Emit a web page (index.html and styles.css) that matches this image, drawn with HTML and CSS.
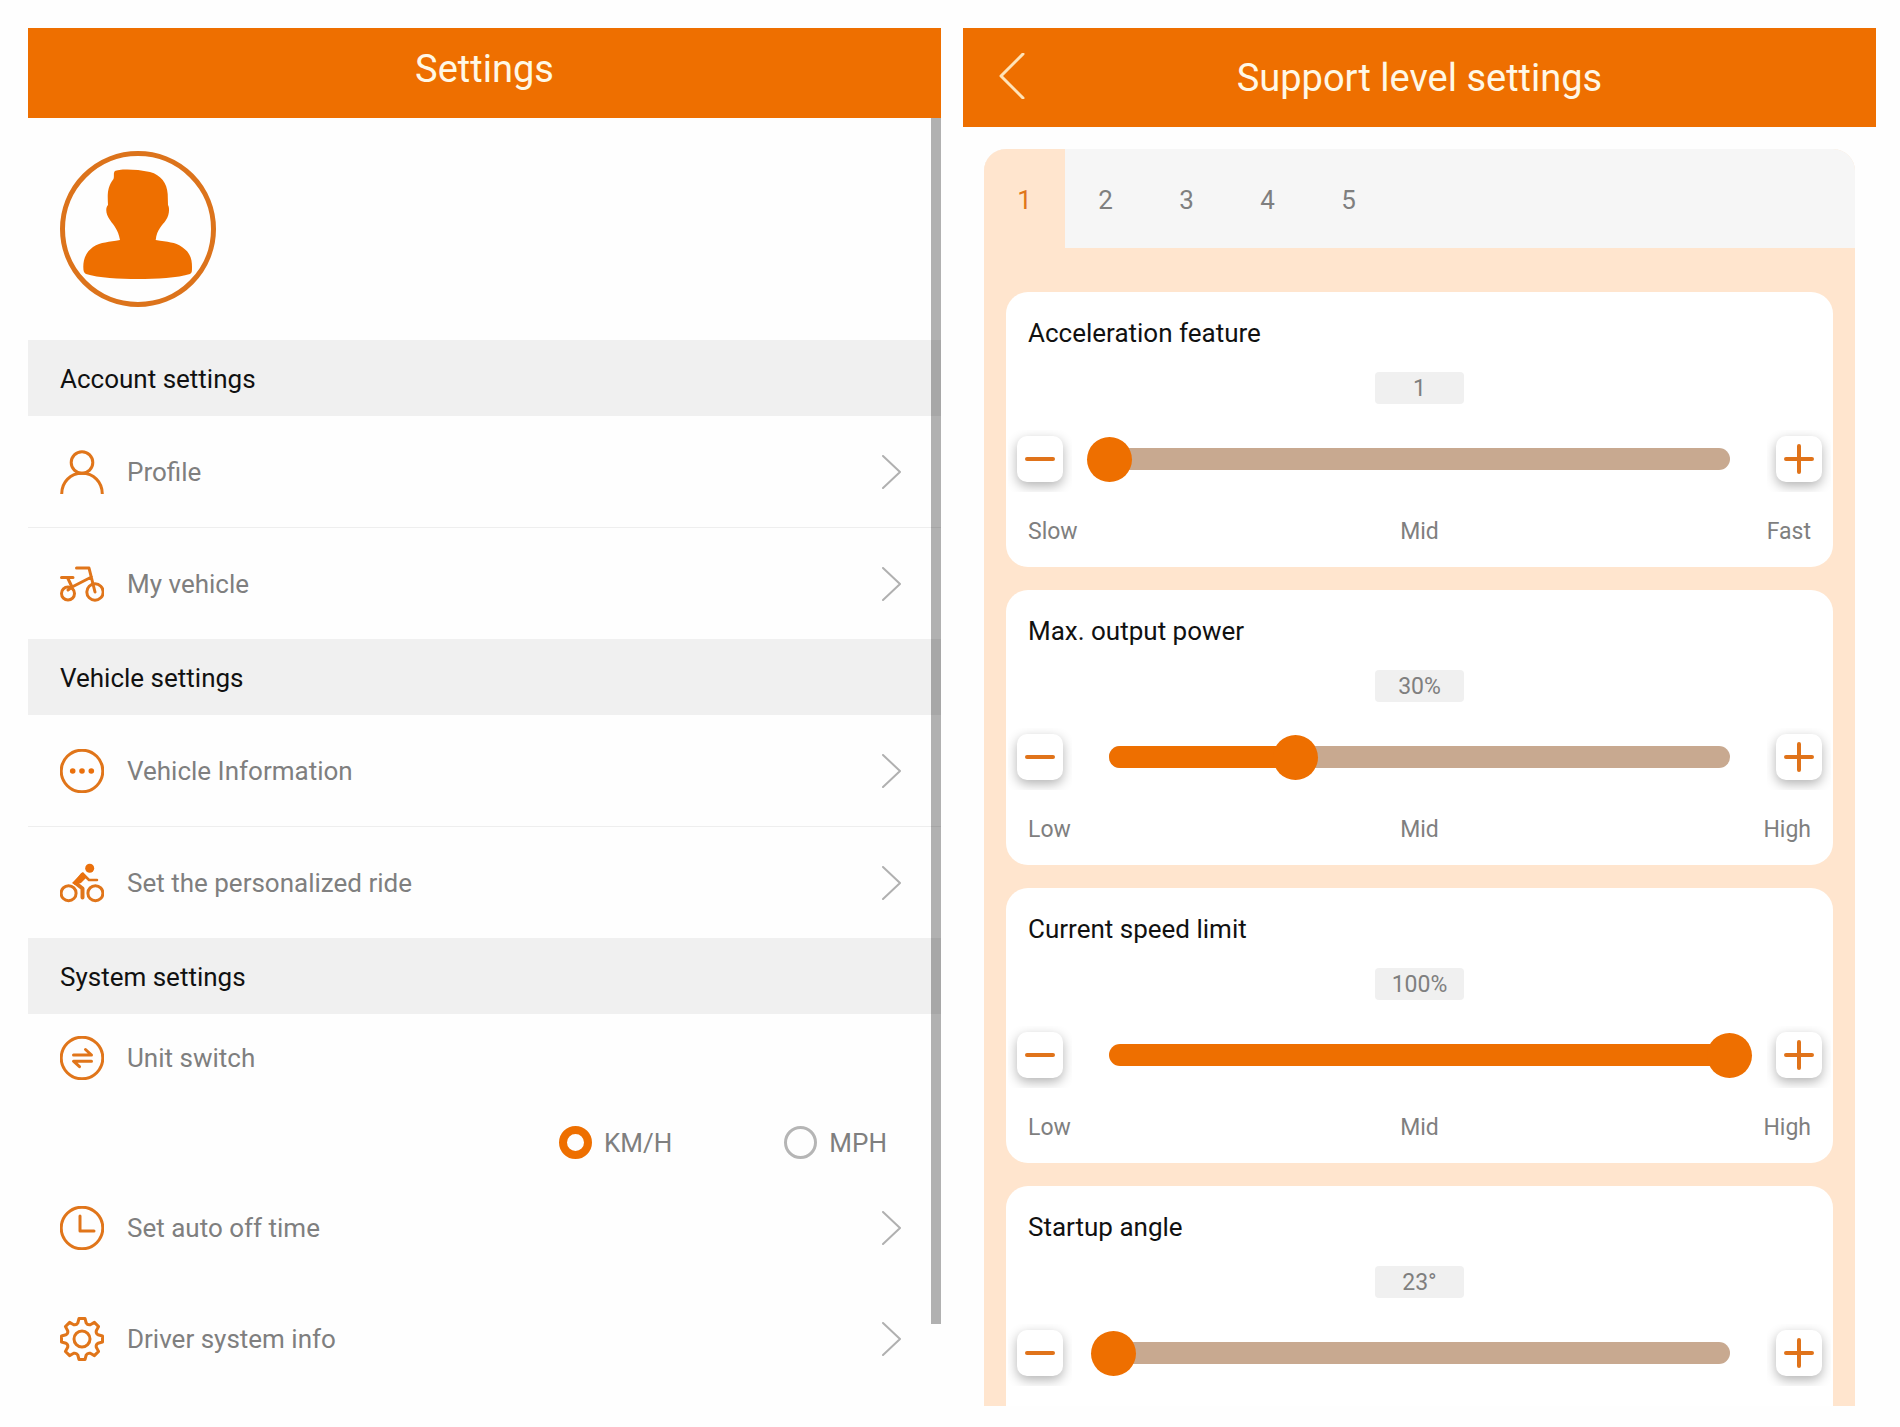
FILE: index.html
```html
<!DOCTYPE html>
<html lang="en">
<head>
    <meta charset="UTF-8">
    <meta name="viewport" content="width=device-width, initial-scale=1.0">
    <title>Settings</title>
    <link rel="stylesheet" href="styles.css">
</head>
<body>
    <main class="screens">
        <section class="screen">
            <header class="header header-main">
                <h1>Settings</h1>
            </header>

            <div class="settings">
                <div class="profile-photo">
                    <svg class="avatar" viewBox="0 0 156 156" role="img" aria-label="User photo">
                        <circle cx="78" cy="78" r="75.500" fill="none" stroke="#dc731b" stroke-width="5"/>
                        <path fill="#ee6f00" d="M55 20C58 18 75 17.500 90 21C101 24 107 32 107.700 43L108 54C110 57 109 65 106 69C102 75 97 78 95.700 89C108 91 115 91 122 96C131 102 132 109 132 116C132 120 132 122 130 123C118 127 96 128 77.700 128C60 128 38 127 26 123C24 122 23.300 120 23.300 116C23.300 109 25 102 33 96C41 91 49 91 60 89C58 78 54 75 50 69C46 64 45 57 48 54C47.500 44 47 36 53.500 28C54.500 25 53 22 55 20Z"/>
                    </svg>
                </div>

                <h2 class="group-title">Account settings</h2>
                <a class="row" href="#profile">
                    <svg class="icon" viewBox="0 0 44 44">
                        <circle cx="22" cy="12.500" r="10.800"/>
                        <path d="M1.700 44C1.700 32 10.500 23.300 22 23.300S42.300 32 42.300 44"/>
                    </svg>
                    <span>Profile</span>
                    <svg class="chevron" viewBox="0 0 20 34"><path d="M1 1l17 16L1 33"/></svg>
                </a>
                <a class="row" href="#vehicle">
                    <svg class="icon" viewBox="0 0 44 44">
                        <circle cx="8" cy="31.500" r="6.500"/>
                        <circle cx="35" cy="30" r="8.200"/>
                        <path d="M16.500 6h12.500L35 30M1.500 15.500h11.500M7.500 15.500l4.500 9.500L31.500 15M12 25L8 28"/>
                    </svg>
                    <span>My vehicle</span>
                    <svg class="chevron" viewBox="0 0 20 34"><path d="M1 1l17 16L1 33"/></svg>
                </a>

                <h2 class="group-title">Vehicle settings</h2>
                <a class="row" href="#information">
                    <svg class="icon" viewBox="0 0 44 44">
                        <circle cx="22" cy="22" r="20.800"/>
                        <g class="solid">
                            <circle cx="12.700" cy="22" r="2.800"/>
                            <circle cx="22" cy="22" r="2.800"/>
                            <circle cx="31.300" cy="22" r="2.800"/>
                        </g>
                    </svg>
                    <span>Vehicle Information</span>
                    <svg class="chevron" viewBox="0 0 20 34"><path d="M1 1l17 16L1 33"/></svg>
                </a>
                <a class="row" href="#ride">
                    <svg class="icon" viewBox="0 0 44 44">
                        <circle cx="8.600" cy="32.200" r="7.500"/>
                        <circle cx="35.400" cy="32.200" r="7.500"/>
                        <circle class="solid" cx="29.700" cy="7.200" r="4.500"/>
                        <path d="M24 14l5 5h8" stroke-width="2.500"/>
                        <path d="M22.500 13.500L15.500 22l7 5.500v9" stroke-width="4"/>
                        <path class="solid" d="M23 11l4 5-6 6-6 2-3-2z"/>
                    </svg>
                    <span>Set the personalized ride</span>
                    <svg class="chevron" viewBox="0 0 20 34"><path d="M1 1l17 16L1 33"/></svg>
                </a>

                <h2 class="group-title">System settings</h2>
                <div class="row row-unit">
                    <svg class="icon" viewBox="0 0 44 44">
                        <circle cx="22" cy="22" r="20.800"/>
                        <path d="M13.500 19h18l-6-5.500M31.500 25.200h-18l6 5.500"/>
                    </svg>
                    <span>Unit switch</span>
                </div>
                <div class="unit-options">
                    <label><input type="radio" name="unit" checked> KM/H</label>
                    <label><input type="radio" name="unit"> MPH</label>
                </div>
                <a class="row" href="#auto-off">
                    <svg class="icon" viewBox="0 0 44 44">
                        <circle cx="22" cy="22" r="20.800"/>
                        <path d="M20 10v15h14"/>
                    </svg>
                    <span>Set auto off time</span>
                    <svg class="chevron" viewBox="0 0 20 34"><path d="M1 1l17 16L1 33"/></svg>
                </a>
                <a class="row" href="#driver">
                    <svg class="icon" viewBox="0 0 44 44">
                        <path d="M17.800 6L19 1.500H25L26.200 6Q27.600 8.400 30.300 7.700L34.400 5.400L38.600 9.600L36.300 13.700Q35.600 16.400 38 17.800L42.500 19V25L38 26.200Q35.600 27.600 36.300 30.300L38.600 34.400L34.400 38.600L30.300 36.300Q27.600 35.600 26.200 38L25 42.500H19L17.800 38Q16.400 35.600 13.700 36.300L9.600 38.600L5.400 34.400L7.700 30.300Q8.400 27.600 6 26.200L1.500 25V19L6 17.800Q8.400 16.400 7.700 13.700L5.400 9.600L9.600 5.400L13.700 7.700Q16.400 8.400 17.800 6Z"/>
                        <circle cx="22" cy="22" r="8"/>
                    </svg>
                    <span>Driver system info</span>
                    <svg class="chevron" viewBox="0 0 20 34"><path d="M1 1l17 16L1 33"/></svg>
                </a>
                <div class="scrollbar"></div>
            </div>
        </section>

        <section class="screen">
            <header class="header header-sub">
                <button class="back" type="button" aria-label="Back">
                    <svg viewBox="0 0 26 46"><path d="M24 1L2 23l22 22"/></svg>
                </button>
                <h1>Support level settings</h1>
            </header>

            <div class="levels">
                <nav class="tabs">
                    <button class="tab active" type="button">1</button>
                    <button class="tab" type="button">2</button>
                    <button class="tab" type="button">3</button>
                    <button class="tab" type="button">4</button>
                    <button class="tab" type="button">5</button>
                </nav>

                <div class="cards">
                    <div class="card">
                        <h2 id="acceleration">Acceleration feature</h2>
                        <output class="value">1</output>
                        <div class="control">
                            <button class="step" type="button" aria-label="Decrease"><svg viewBox="0 0 30 30"><path d="M2 15h26"/></svg></button>
                            <div class="slider">
                                <div class="track"><div class="fill" style="width: 0%"></div></div>
                                <input type="range" min="1" max="8" value="1" aria-labelledby="acceleration">
                            </div>
                            <button class="step" type="button" aria-label="Increase"><svg viewBox="0 0 30 30"><path d="M2 15h26M15 2v26"/></svg></button>
                        </div>
                        <div class="scale"><span>Slow</span><span>Mid</span><span>Fast</span></div>
                    </div>

                    <div class="card">
                        <h2 id="power">Max. output power</h2>
                        <output class="value">30%</output>
                        <div class="control">
                            <button class="step" type="button" aria-label="Decrease"><svg viewBox="0 0 30 30"><path d="M2 15h26"/></svg></button>
                            <div class="slider">
                                <div class="track"><div class="fill" style="width: 30%"></div></div>
                                <input type="range" min="0" max="100" value="30" aria-labelledby="power">
                            </div>
                            <button class="step" type="button" aria-label="Increase"><svg viewBox="0 0 30 30"><path d="M2 15h26M15 2v26"/></svg></button>
                        </div>
                        <div class="scale"><span>Low</span><span>Mid</span><span>High</span></div>
                    </div>

                    <div class="card">
                        <h2 id="speed">Current speed limit</h2>
                        <output class="value">100%</output>
                        <div class="control">
                            <button class="step" type="button" aria-label="Decrease"><svg viewBox="0 0 30 30"><path d="M2 15h26"/></svg></button>
                            <div class="slider">
                                <div class="track"><div class="fill" style="width: 100%"></div></div>
                                <input type="range" min="0" max="100" value="100" aria-labelledby="speed">
                            </div>
                            <button class="step" type="button" aria-label="Increase"><svg viewBox="0 0 30 30"><path d="M2 15h26M15 2v26"/></svg></button>
                        </div>
                        <div class="scale"><span>Low</span><span>Mid</span><span>High</span></div>
                    </div>

                    <div class="card card-last">
                        <h2 id="angle">Startup angle</h2>
                        <output class="value">23°</output>
                        <div class="control">
                            <button class="step" type="button" aria-label="Decrease"><svg viewBox="0 0 30 30"><path d="M2 15h26"/></svg></button>
                            <div class="slider">
                                <div class="track"><div class="fill" style="width: 1%"></div></div>
                                <input type="range" min="22" max="160" value="23" aria-labelledby="angle">
                            </div>
                            <button class="step" type="button" aria-label="Increase"><svg viewBox="0 0 30 30"><path d="M2 15h26M15 2v26"/></svg></button>
                        </div>
                    </div>
                </div>
            </div>
        </section>
    </main>
</body>
</html>
```
FILE: styles.css
```css
* {
    box-sizing: border-box;
}

body {
    margin: 0;
    font-family: Roboto, Arial, sans-serif;
    font-size: 26px;
    line-height: 30px;
    color: #7f7f7f;
    background: #fefefe;
}

h1, h2 {
    margin: 0;
    font-weight: 400;
}

h2 {
    font-size: 26px;
    color: #111;
}

button {
    padding: 0;
    border: none;
    background: none;
    font: inherit;
    color: inherit;
    cursor: pointer;
}

svg {
    display: block;
    fill: none;
    stroke-linecap: round;
    stroke-linejoin: round;
}

.screens {
    display: grid;
    grid-template-columns: 1fr 1fr;
    gap: 22px;
    height: 100vh;
    padding: 28px 24px 21px 28px;
}

.screen {
    display: flex;
    flex-direction: column;
    min-height: 0;
    overflow: hidden;
}

/* Headers */
.header {
    flex: none;
    background: #ee6f00;
    color: #fff8e6;
}

.header h1 {
    font-size: 38px;
    line-height: 46px;
    text-align: center;
}

.header-main {
    padding: 18px 0 26px;
}

.header-sub {
    display: grid;
    grid-template-columns: 1fr auto 1fr;
    align-items: center;
    padding: 23px 36px 26px;
}

.header-sub h1 {
    padding-top: 4px;
}

.back svg {
    width: 26px;
    height: 46px;
    stroke: #ffe3b8;
    stroke-width: 3;
}

/* Settings list */
.settings {
    position: relative;
    flex: 1;
    min-height: 0;
}

.profile-photo {
    padding: 33px 32px;
}

.avatar {
    width: 156px;
    height: 156px;
}

.group-title {
    padding: 24px 32px 22px;
    background: #f0f0f0;
}

.row {
    display: flex;
    align-items: center;
    gap: 23px;
    padding: 34px 39px 33px 32px;
    color: inherit;
    text-decoration: none;
}

.group-title + a.row {
    border-bottom: 1px solid #eee;
}

.row-unit {
    padding-top: 22px;
    padding-bottom: 22px;
}

.icon {
    width: 44px;
    height: 44px;
    stroke: #e0751a;
    stroke-width: 3;
}

.icon .solid {
    fill: #ea700c;
    stroke: none;
}

.chevron {
    width: 20px;
    height: 34px;
    margin-left: auto;
    stroke: #b0b0b0;
    stroke-width: 2;
}

.unit-options {
    display: flex;
    justify-content: flex-end;
    gap: 112px;
    padding: 24px 54px 13px;
}

.unit-options label {
    display: flex;
    align-items: center;
    gap: 12px;
}

.unit-options input {
    appearance: none;
    width: 33px;
    height: 33px;
    margin: 0;
    border: 3px solid #b5b5b5;
    border-radius: 50%;
}

.unit-options input:checked {
    border: 8px solid #ee6f00;
}

.scrollbar {
    position: absolute;
    top: 0;
    right: 0;
    width: 10px;
    height: calc(100% - 82px);
    background: rgba(0, 0, 0, 0.3);
}

/* Support levels */
.levels {
    display: flex;
    flex-direction: column;
    flex: 1;
    min-height: 0;
    margin: 22px 21px 0;
    border-radius: 22px 0 0 0;
    background: #ffe5ce;
    overflow: hidden;
    border-top-right-radius: 22px;
}

.tabs {
    display: flex;
    flex: none;
    background: #f6f6f6;
}

.tab {
    width: 81px;
    padding: 36px 0 33px;
}

.tab.active {
    background: #ffe5ce;
    color: #e0751a;
}

.cards {
    display: flex;
    flex-direction: column;
    flex: 1;
    gap: 23px;
    padding: 44px 22px 0;
}

.card {
    flex: none;
    padding: 26px 0 22px;
    border-radius: 22px;
    background: #fff;
}

/* The last card runs on below the screen */
.card-last {
    flex: 1;
    border-radius: 22px 22px 0 0;
}

.card h2 {
    padding: 0 22px;
}

.value {
    display: block;
    width: 89px;
    margin: 24px auto 32px;
    padding-top: 2px;
    border-radius: 4px;
    background: #f0f0f0;
    font-size: 23px;
    line-height: 30px;
    text-align: center;
}

.control {
    display: flex;
    align-items: center;
    gap: 24px;
    padding: 0 11px;
}

.step {
    flex: none;
    width: 46px;
    height: 46px;
    padding: 8px;
    border-radius: 10px;
    background: #fff;
    box-shadow: 0 4px 12px rgba(0, 0, 0, 0.3);
    clip-path: inset(-6px -9px -10px);
}

.step svg {
    width: 30px;
    height: 30px;
    stroke: #e0731a;
    stroke-width: 4;
}

.slider {
    position: relative;
    flex: 1;
    padding: 0 22px;
}

.track {
    height: 22px;
    border-radius: 11px;
    background: #c8a990;
    overflow: hidden;
}

.fill {
    height: 100%;
    background: #ee6f00;
}

.slider input {
    appearance: none;
    position: absolute;
    inset: 0;
    width: 100%;
    margin: 0;
    background: transparent;
}

.slider input::-webkit-slider-thumb {
    appearance: none;
    width: 45px;
    height: 45px;
    border-radius: 50%;
    background: #ee6f00;
}

.scale {
    display: grid;
    grid-template-columns: 1fr 1fr 1fr;
    padding: 37px 22px 0;
    font-size: 23px;
    line-height: 26px;
    text-align: center;
}

.scale span:first-child {
    text-align: left;
}

.scale span:last-child {
    text-align: right;
}

/* Stack the two screens on narrow windows */
@media (max-width: 900px) {
    .screens {
        grid-template-columns: 1fr;
        height: auto;
    }
}
```
